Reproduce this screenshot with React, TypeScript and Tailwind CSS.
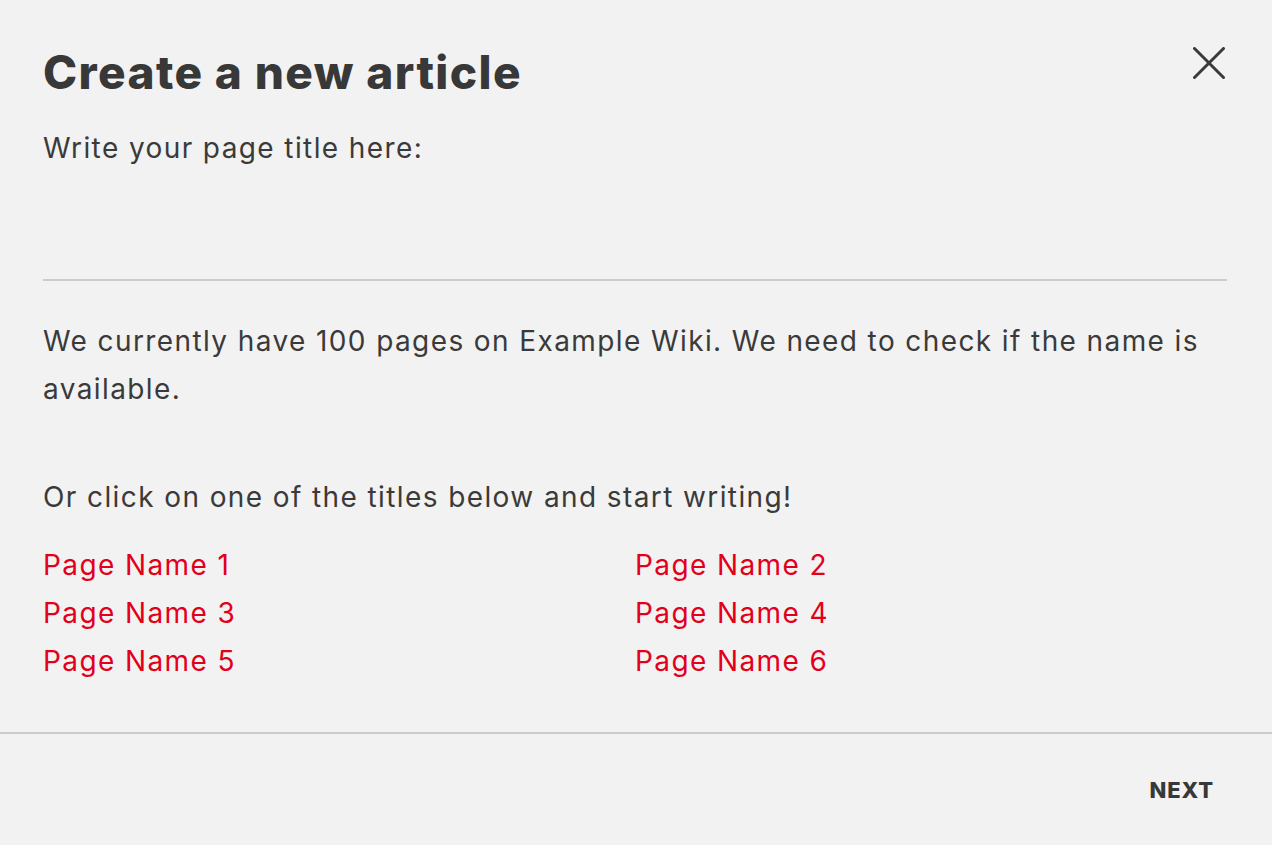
import React from 'react';

const pages = ['Page Name 1', 'Page Name 2', 'Page Name 3', 'Page Name 4', 'Page Name 5', 'Page Name 6'];

export default function App() {
  return (
    <div className="min-h-screen bg-[#f2f2f2] flex flex-col text-[#3a3a3a] font-['Inter','Liberation_Sans',sans-serif]">
      {/* Body */}
      <div className="pl-[43px] pr-[45px] pt-[44px] text-[28px] leading-[48px] tracking-[0.05em]">
        <div className="flex items-start justify-between">
          <h1 className="text-[46px] leading-[56px] font-extrabold tracking-[0.03em] text-[#383838]">
            Create a new article
          </h1>
          <button className="mt-[3px] mr-[2px] text-[#3a3a3a]" aria-label="Close">
            <svg width="32" height="32" viewBox="0 0 32 32" fill="none" stroke="currentColor" strokeWidth="3" strokeLinecap="round">
              <path d="M1.5 1.5 30.5 30.5" />
              <path d="M30.5 1.5 1.5 30.5" />
            </svg>
          </button>
        </div>

        <label className="block mt-[24px]">Write your page title here:</label>
        <input
          type="text"
          className="block w-full h-[109px] bg-transparent border-b-2 border-[#cccccc] outline-none"
        />

        <p className="mt-[36px]">
          We currently have 100 pages on Example Wiki. We need to check if the name is available.
        </p>

        <p className="mt-[60px]">Or click on one of the titles below and start writing!</p>

        <div className="grid grid-cols-2 mt-[20px]">
          {pages.map((p) => (
            <a key={p} href="#" className="text-[#e2001a]">
              {p}
            </a>
          ))}
        </div>
      </div>

      {/* Footer */}
      <div className="mt-[47px] border-t-2 border-[#cccccc] h-[113px] flex items-center justify-end pr-[58px]">
        <button className="text-[22px] font-extrabold tracking-[0.04em] text-[#383838] mt-[2px]">NEXT</button>
      </div>
    </div>
  );
}
